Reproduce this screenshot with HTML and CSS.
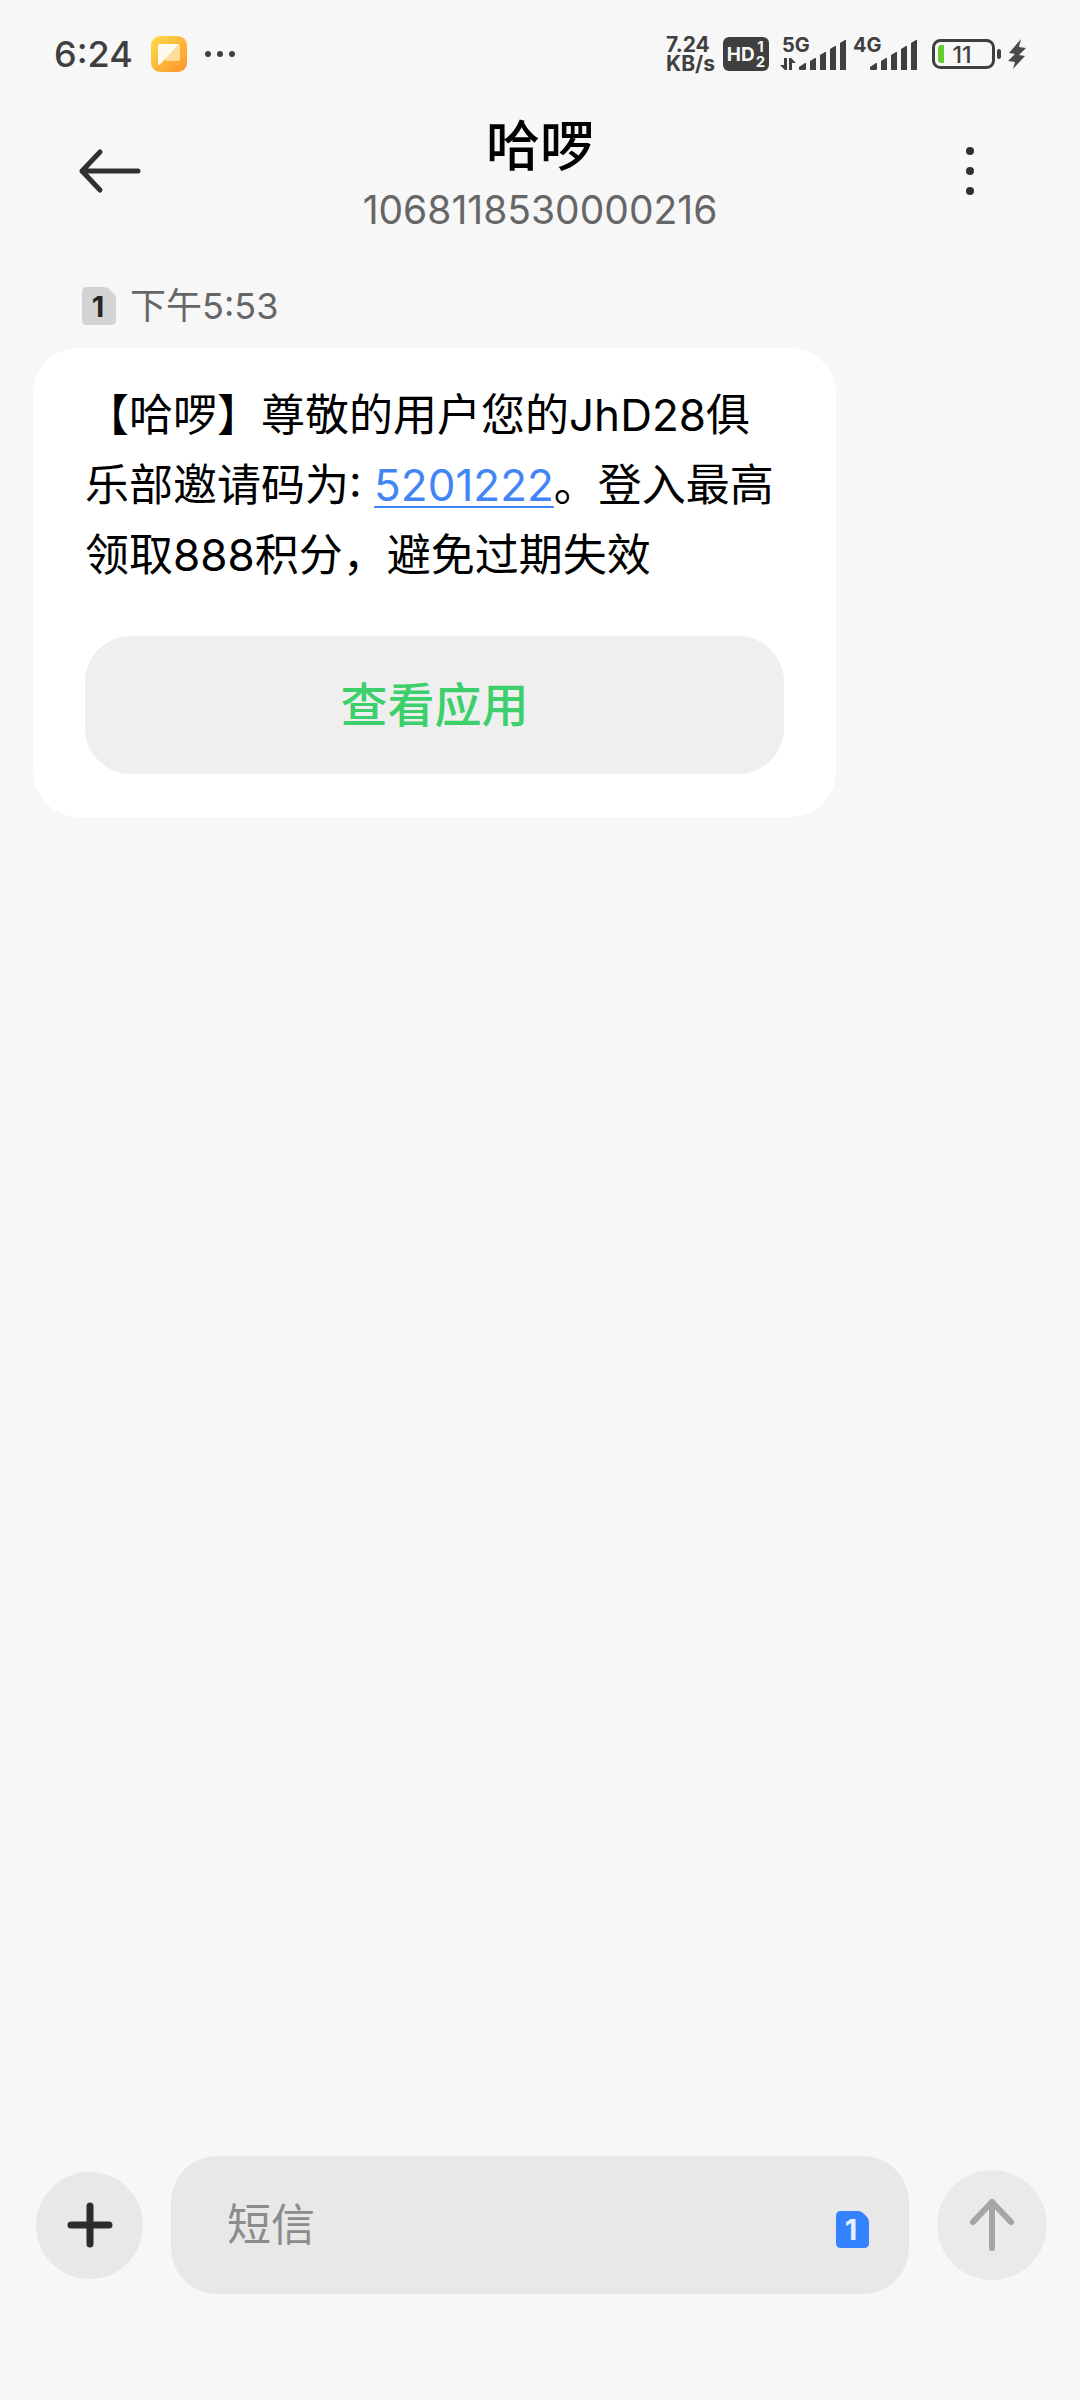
FILE: index.html
```html
<!DOCTYPE html>
<html lang="zh-CN">
    <head>
        <meta charset="utf-8">
        <meta name="viewport" content="width=device-width">
        <title>哈啰</title>
        <link rel="stylesheet" href="styles.css">
    </head>
    <body>
        <div class="status_bar">
            <span class="clock">6:24</span>
            <svg class="app_icon" width="36" height="36" viewBox="0 0 36 36">
                <defs>
                    <linearGradient id="app_bg" x1="0" y1="0" x2="1" y2="1">
                        <stop offset="0" stop-color="#fbdc4c" />
                        <stop offset="0.5" stop-color="#fcb83a" />
                        <stop offset="1" stop-color="#fd9228" />
                    </linearGradient>
                </defs>
                <rect width="36" height="36" rx="9" fill="url(#app_bg)" />
                <path d="M9 8h18a2 2 0 0 1 2 2v13a2 2 0 0 1-2 2H15z" fill="#fedd98" />
                <path d="M9 8h19L8.500 29 7 28V10a2 2 0 0 1 2-2z" fill="#fffaf0" />
            </svg>
            <svg class="dots" width="32" height="8" viewBox="0 0 32 8" fill="#3f3f3f">
                <circle cx="4" cy="4" r="3" />
                <circle cx="16" cy="4" r="3" />
                <circle cx="28" cy="4" r="3" />
            </svg>

            <div class="net_speed">7.24<br />KB/s</div>
            <div class="hd">
                <span>HD</span>
                <span class="hd_nums">1<br />2</span>
            </div>
            <svg class="signal" width="68" height="36" viewBox="0 0 68 36" fill="#3f3f3f">
                <text class="signal_text" x="2" y="16">5G</text>
                <path d="M4 22h3v12H5l-5-5h4zM9 22h2l5 5h-4v7H9z" />
                <path d="M19 31l6-4h1v6q0 1-1 1h-5q-1 0-1-1zM30 25l5-3h1v12h-6zM40 19l5-3h1v18h-6zM50 13l5-3h1v24h-6zM60 7l5-3h1v30h-6z" />
            </svg>
            <svg class="signal" width="67" height="36" viewBox="0 0 67 36" fill="#3f3f3f">
                <text class="signal_text" x="0" y="16">4G</text>
                <path d="M17 31l6-4h1v6q0 1-1 1h-5q-1 0-1-1zM28 25l5-3h1v12h-6zM38 19l5-3h1v18h-6zM48 13l5-3h1v24h-6zM58 7l5-3h1v30h-6z" />
            </svg>
            <svg class="battery" width="70" height="30" viewBox="0 0 70 30">
                <rect x="1.500" y="1.500" width="60" height="27" rx="7" fill="none" stroke="#3f3f3f" stroke-width="3" />
                <path d="M12 6v18H9q-3 0-3-4V10q0-4 3-4z" fill="#66cc2e" />
                <rect x="65" y="10" width="4" height="10" rx="2" fill="#3f3f3f" />
                <text class="battery_text" x="30" y="24" text-anchor="middle">11</text>
            </svg>
            <svg class="bolt" width="18" height="30" viewBox="0 0 18 30" fill="#4a4a4a">
                <path d="M13 0L1 14l6 1-7 7 7 1-2 7 12-13-6-1 7-7-7-1z" />
            </svg>
        </div>

        <header class="header">
            <button class="icon_button" aria-label="返回">
                <svg width="62" height="42" viewBox="0 0 62 42" fill="none" stroke="#303030" stroke-width="5" stroke-linecap="round" stroke-linejoin="round">
                    <path d="M58 21H2M20 2L2 21l18 19" />
                </svg>
            </button>
            <div class="contact">
                <h1 class="name">哈啰</h1>
                <div class="number">1068118530000216</div>
            </div>
            <button class="icon_button more" aria-label="更多">
                <svg width="60" height="48" viewBox="0 0 60 48" fill="#303030">
                    <circle cx="30" cy="4" r="4" />
                    <circle cx="30" cy="24" r="4" />
                    <circle cx="30" cy="44" r="4" />
                </svg>
            </button>
        </header>

        <main class="messages">
            <div class="time">
                <svg width="34" height="38" viewBox="0 0 34 38">
                    <path d="M5 0h17q3 0 5 2l5 5q2 2 2 5v21q0 5-5 5H5q-5 0-5-5V5q0-5 5-5z" fill="#d3d3d3" />
                    <text class="sim_text" x="16" y="30" text-anchor="middle" fill="#262626">1</text>
                </svg>
                <time datetime="17:53">下午5:53</time>
            </div>
            <div class="bubble">
                <p class="message_text">【哈啰】尊敬的用户您的JhD28俱乐部邀请码为: <a href="#">5201222</a>。登入最高领取888积分，避免过期失效</p>
                <button class="app_button">查看应用</button>
            </div>
        </main>

        <form class="composer">
            <button class="round_button add" type="button" aria-label="添加">
                <svg width="46" height="46" viewBox="0 0 46 46" stroke="#2c2c2c" stroke-width="7" stroke-linecap="round">
                    <path d="M23 4v38M4 23h38" />
                </svg>
            </button>
            <div class="input_box">
                <input class="message_input" type="text" placeholder="短信" aria-label="短信">
                <button class="sim_button" type="button" aria-label="SIM 1">
                    <svg width="33" height="37" viewBox="0 0 33 37">
                        <path d="M5 0h17q3 0 5 2l4 4q2 2 2 5v21q0 5-5 5H5q-5 0-5-5V5q0-5 5-5z" fill="#3482ff" />
                        <text class="sim_text" x="15" y="29" text-anchor="middle" fill="#e6f0ff">1</text>
                    </svg>
                </button>
            </div>
            <button class="round_button send" type="button" aria-label="发送">
                <svg width="46" height="54" viewBox="0 0 46 54" fill="none" stroke="#a5a5a5" stroke-width="6" stroke-linecap="round" stroke-linejoin="round">
                    <path d="M23 50V4M4 24L23 4l19 20" />
                </svg>
            </button>
        </form>
    </body>
</html>
```

FILE: styles.css
```css
* {
    box-sizing: border-box;
}

body {
    display: flex;
    flex-direction: column;
    min-height: 100vh;
    margin: 0;
    background-color: #f7f7f7;
    color: #000;
    font-family: Inter, "Noto Sans CJK SC", sans-serif;
}

button {
    padding: 0;
    border: 0;
    background: none;
    font-family: inherit;
}

svg {
    display: block;
    flex: none;
    overflow: visible;
}

.status_bar {
    display: flex;
    align-items: center;
    height: 108px;
    padding: 0 54px;
    color: #3f3f3f;
}

.clock {
    font-size: 36px;
    font-weight: 500;
}

.app_icon {
    margin-left: 18px;
}

.dots {
    margin-left: 17px;
}

.net_speed {
    margin-left: auto;
    font-size: 21px;
    font-weight: 700;
    line-height: 19px;
}

.hd {
    display: flex;
    align-items: center;
    justify-content: center;
    gap: 1px;
    width: 46px;
    height: 34px;
    margin-left: 8px;
    border-radius: 6px;
    background-color: #3f3f3f;
    color: #f7f7f7;
    font-size: 19px;
    font-weight: 700;
}

.hd_nums {
    font-size: 15px;
    line-height: 15px;
    text-align: center;
}

.signal {
    margin-left: 11px;
}

.signal + .signal {
    margin-left: 5px;
}

.signal_text {
    font-size: 20px;
    font-weight: 700;
}

.battery {
    margin-left: 12px;
}

.battery_text {
    fill: #3f3f3f;
    font-size: 23px;
    font-weight: 500;
}

.bolt {
    margin-left: 6px;
}

.header {
    display: grid;
    grid-template-columns: 1fr auto 1fr;
    align-items: center;
    padding: 0 80px;
}

.icon_button {
    justify-self: start;
}

.more {
    justify-self: end;
}

.contact {
    margin: 3px 0 -3px;
    text-align: center;
}

.name {
    margin: 0;
    font-size: 54px;
    font-weight: 500;
    line-height: 72px;
}

.number {
    color: #666;
    font-size: 39px;
    line-height: 54px;
}

.messages {
    flex: 1;
    padding: 48px 33px;
}

.time {
    display: flex;
    align-items: center;
    gap: 14px;
    padding-left: 49px;
    color: #666;
    font-size: 36px;
    line-height: 48px;
}

.sim_text {
    font-size: 29px;
    font-weight: 700;
}

.bubble {
    max-width: 803px;
    margin-top: 18px;
    padding: 32px 52px 43px;
    border-radius: 46px;
    background-color: #fff;
}

.message_text {
    margin: 0 0 46px;
    font-size: 44px;
    line-height: 70px;
}

.message_text a {
    color: #4285f5;
    text-decoration-thickness: 2px;
    text-underline-offset: 5px;
}

.app_button {
    width: 100%;
    height: 138px;
    border-radius: 46px;
    background-color: #efefef;
    color: #3ccf6b;
    font-size: 47px;
    font-weight: 500;
    line-height: 60px;
}

.composer {
    display: flex;
    align-items: center;
    gap: 28px;
    padding: 0 33px 106px 36px;
}

.round_button {
    display: flex;
    flex: none;
    align-items: center;
    justify-content: center;
    border-radius: 50%;
}

.add {
    width: 107px;
    height: 107px;
    background-color: #e8e8e8;
}

.send {
    width: 110px;
    height: 110px;
    background-color: #eaeaea;
}

.input_box {
    display: flex;
    flex: 1;
    align-items: center;
    min-width: 0;
    height: 138px;
    padding: 0 40px 0 56px;
    border-radius: 46px;
    background-color: #e8e8e8;
}

.message_input {
    flex: 1;
    min-width: 0;
    padding: 0;
    border: 0;
    outline: 0;
    background: none;
    font-family: inherit;
    font-size: 44px;
    line-height: 60px;
}

.message_input::placeholder {
    color: #8c8c8c;
}

.sim_button {
    padding-top: 8px;
}
```
